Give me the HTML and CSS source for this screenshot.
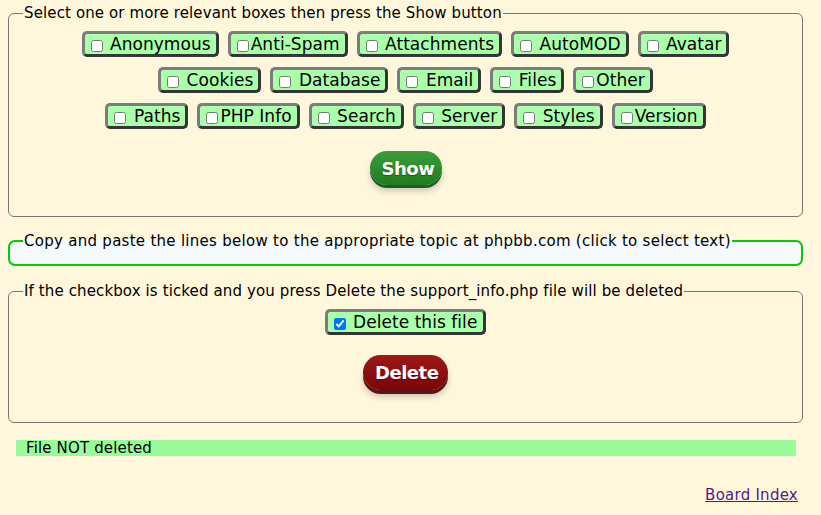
FILE: index.html
```html
<!DOCTYPE html>
<html>
<head>
<meta charset="utf-8">
<title>Support Info</title>
<link rel="stylesheet" href="styles.css">
</head>
<body>
<form class="panel">
  <fieldset class="box box-select">
    <legend>Select one or more relevant boxes then press the Show button</legend>
    <div class="rows">
      <div class="row">
        <label class="opt"><input type="checkbox"> Anonymous</label>
        <label class="opt"><input type="checkbox">Anti-Spam</label>
        <label class="opt"><input type="checkbox"> Attachments</label>
        <label class="opt"><input type="checkbox"> AutoMOD</label>
        <label class="opt"><input type="checkbox"> Avatar</label>
      </div>
      <div class="row">
        <label class="opt"><input type="checkbox"> Cookies</label>
        <label class="opt"><input type="checkbox"> Database</label>
        <label class="opt"><input type="checkbox"> Email</label>
        <label class="opt"><input type="checkbox"> Files</label>
        <label class="opt"><input type="checkbox">Other</label>
      </div>
      <div class="row">
        <label class="opt"><input type="checkbox"> Paths</label>
        <label class="opt"><input type="checkbox">PHP Info</label>
        <label class="opt"><input type="checkbox"> Search</label>
        <label class="opt"><input type="checkbox"> Server</label>
        <label class="opt"><input type="checkbox"> Styles</label>
        <label class="opt"><input type="checkbox">Version</label>
      </div>
    </div>
    <div class="actions">
      <button type="button" class="pill pill-green">Show</button>
    </div>
  </fieldset>

  <fieldset class="box box-copy">
    <legend>Copy and paste the lines below to the appropriate topic at phpbb.com (click to select text)</legend>
  </fieldset>

  <fieldset class="box box-delete">
    <legend>If the checkbox is ticked and you press Delete the support_info.php file will be deleted</legend>
    <div class="row">
      <label class="opt opt-del"><input type="checkbox" checked> Delete this file</label>
    </div>
    <div class="actions actions-del">
      <button type="button" class="pill pill-red">Delete</button>
    </div>
  </fieldset>
</form>

<div class="status">File NOT deleted</div>

<div class="footer"><a href="#" class="board-link">Board Index</a></div>
</body>
</html>
```

FILE: styles.css
```css
html, body {
  background: #fff7dc;
}
body {
  margin: 0 18px 0 8px;
  padding-top: 3px;
  font-family: "DejaVu Sans", sans-serif;
  color: #000;
}
.panel {
  margin: 0;
}
.box {
  margin: 0;
  border: 1px solid #777;
  border-radius: 6px;
  padding: 0 12px;
}
.box legend {
  font-size: 15px;
  line-height: 20px;
  padding: 0 1px;
  margin-left: 2px;
  letter-spacing: 0.12px;
}
.box-select {
  padding-top: 8px;
  padding-bottom: 31px;
}
.rows {
  display: flex;
  flex-direction: column;
  gap: 10px;
}
.row {
  display: flex;
  justify-content: center;
  gap: 9px;
}
.opt {
  display: inline-flex;
  align-items: center;
  height: 26px;
  box-sizing: border-box;
  background: #aaffaa;
  border: 3px solid;
  border-color: #7c7c7c #353535 #353535 #7c7c7c;
  border-radius: 5px;
  padding: 0 5px 0 4px;
  font-size: 17px;
  line-height: 20px;
  white-space: pre;
  letter-spacing: 0.05px;
}
.opt input {
  margin: 4px 2px 0 2px;
  width: 12px;
  height: 12px;
}
.actions {
  display: flex;
  justify-content: center;
  margin-top: 22px;
}
.pill {
  font-family: "DejaVu Sans", sans-serif;
  font-size: 18px;
  font-weight: bold;
  color: #fff;
  border: none;
  border-radius: 18px;
  height: 34px;
  padding: 0 12px;
  letter-spacing: -0.5px;
  text-shadow: 0 1px 1px rgba(0,0,0,0.35);
  cursor: pointer;
}
.pill-green {
  width: 72px;
  background: linear-gradient(#3a9d3a, #1f7d1f);
  box-shadow: 0 3px 0 #1e5e24, 0 6px 6px rgba(0,0,0,0.2);
}
.pill-red {
  width: 85px;
  height: 35px;
  background: linear-gradient(#a01818, #7a0505);
  box-shadow: 0 4px 0 #5a1414, 0 7px 6px rgba(0,0,0,0.2);
}
.box-copy {
  margin-top: 14px;
  border: 2px solid #00cc00;
  border-radius: 7px;
  background: #f4faff;
  padding-bottom: 13px;
  padding-left: 11px;
}
.box-copy legend {
  letter-spacing: 0.28px;
}
.box-delete {
  margin-top: 15px;
  padding-top: 8px;
  padding-bottom: 32px;
}
.opt-del {
  padding-right: 6px;
}
.actions-del {
  margin-top: 20px;
}
.status {
  margin: 17px 7px 0 8px;
  background: #99fb99;
  font-size: 15px;
  line-height: 16px;
  padding-left: 10px;
  letter-spacing: 0.15px;
}
.footer {
  margin-top: 29px;
  text-align: right;
  padding-right: 5px;
  font-size: 15px;
  line-height: 20px;
}
.board-link {
  color: #551a8b;
  letter-spacing: 0.25px;
}
```
